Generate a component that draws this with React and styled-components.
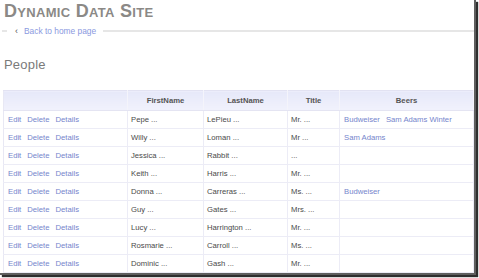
import React from 'react';
import styled, { createGlobalStyle } from 'styled-components';

const GlobalStyle = createGlobalStyle`
  html, body {
    margin: 0;
    padding: 0;
    height: 278px;
    background: #ffffff;
    overflow: hidden;
  }
`;

const Frame = styled.div`
  box-sizing: border-box;
  width: 476px;
  height: 275px;
  background: #ffffff;
  border-right: 2px solid #5e5e5e;
  border-bottom: 2px solid #5e5e5e;
  box-shadow: 2px 2px 1px #2e2e2e;
  overflow: hidden;
  font-family: 'Liberation Sans', Arial, sans-serif;
`;

const SiteTitle = styled.h1`
  margin: 0;
  padding: 1px 0 0 4px;
  height: 22px;
  font-size: 18px;
  font-weight: bold;
  font-variant: small-caps;
  letter-spacing: 0.3px;
  color: #8b8986;
  line-height: 20px;
`;

const NavBar = styled.div`
  display: flex;
  align-items: center;
  gap: 6px;
  height: 14px;
  margin-top: 1px;
  padding-left: 2px;
`;

const Rule = styled.div`
  height: 2px;
  background: #e6e6e6;
  width: ${(p) => (p.$grow ? 'auto' : '5px')};
  flex: ${(p) => (p.$grow ? 1 : 'none')};
`;

const Chevron = styled.span`
  font-size: 9px;
  color: #555;
  margin-left: 2px;
  line-height: 1;
`;

const BackLink = styled.a`
  font-size: 8.4px;
  color: #8a98e0;
  text-decoration: none;
  margin-right: 1px;
`;

const PageTitle = styled.h2`
  margin: 0;
  padding: 19px 0 0 4px;
  height: 36px;
  box-sizing: border-box;
  font-size: 13px;
  font-weight: normal;
  color: #7a7a7a;
  letter-spacing: 0.2px;
`;

const TableWrap = styled.div`
  padding: 16px 0 0 3px;
`;

const Grid = styled.table`
  border-collapse: collapse;
  width: 471px;
  table-layout: fixed;
  font-size: 7.7px;
  line-height: 9px;
  color: #4a4a4a;
  border-top: 1px solid #e2e2f2;
  border-left: 1px solid #e8e8f4;
`;

const HeadCell = styled.th`
  height: 19px;
  padding: 0;
  font-weight: bold;
  color: #555;
  text-align: center;
  background: linear-gradient(#e6e8f9, #f1f2fc);
  border-right: 1px solid #f4f4fb;
  border-bottom: 1px solid #e4e4f2;
`;

const Cell = styled.td`
  height: 17px;
  padding: 0 0 0 ${(p) => (p.$actions ? 4 : 3)}px;
  border-right: 1px solid #ececf6;
  border-bottom: 1px solid #ececf6;
  white-space: nowrap;
  overflow: hidden;
`;

const Link = styled.a`
  color: #7585cc;
  text-decoration: none;
  margin-right: 6px;
`;

const people = [
  ['Pepe ...', 'LePieu ...', 'Mr. ...', ['Budweiser', 'Sam Adams Winter']],
  ['Willy ...', 'Loman ...', 'Mr ...', ['Sam Adams']],
  ['Jessica ...', 'Rabbit ...', '...', []],
  ['Keith ...', 'Harris ...', 'Mr. ...', []],
  ['Donna ...', 'Carreras ...', 'Ms. ...', ['Budweiser']],
  ['Guy ...', 'Gates ...', 'Mrs. ...', []],
  ['Lucy ...', 'Harrington ...', 'Mr. ...', []],
  ['Rosmarie ...', 'Carroll ...', 'Ms. ...', []],
  ['Dominic ...', 'Gash ...', 'Mr. ...', []],
];

const App = () => {
  return (
    <>
      <GlobalStyle />
      <Frame>
        <SiteTitle>Dynamic Data Site</SiteTitle>
        <NavBar>
          <Rule />
          <Chevron>‹</Chevron>
          <BackLink href="#">Back to home page</BackLink>
          <Rule $grow />
        </NavBar>
        <PageTitle>People</PageTitle>
        <TableWrap>
          <Grid>
            <colgroup>
              <col style={{ width: 124 }} />
              <col style={{ width: 76 }} />
              <col style={{ width: 84 }} />
              <col style={{ width: 52 }} />
              <col />
            </colgroup>
            <thead>
              <tr>
                <HeadCell />
                <HeadCell>FirstName</HeadCell>
                <HeadCell>LastName</HeadCell>
                <HeadCell>Title</HeadCell>
                <HeadCell>Beers</HeadCell>
              </tr>
            </thead>
            <tbody>
              {people.map(([first, last, title, beers]) => (
                <tr key={first}>
                  <Cell $actions>
                    <Link href="#">Edit</Link>
                    <Link href="#">Delete</Link>
                    <Link href="#">Details</Link>
                  </Cell>
                  <Cell>{first}</Cell>
                  <Cell>{last}</Cell>
                  <Cell>{title}</Cell>
                  <Cell $actions>
                    {beers.map((b) => (
                      <Link key={b} href="#">{b}</Link>
                    ))}
                  </Cell>
                </tr>
              ))}
            </tbody>
          </Grid>
        </TableWrap>
      </Frame>
    </>
  );
};

export default App;
